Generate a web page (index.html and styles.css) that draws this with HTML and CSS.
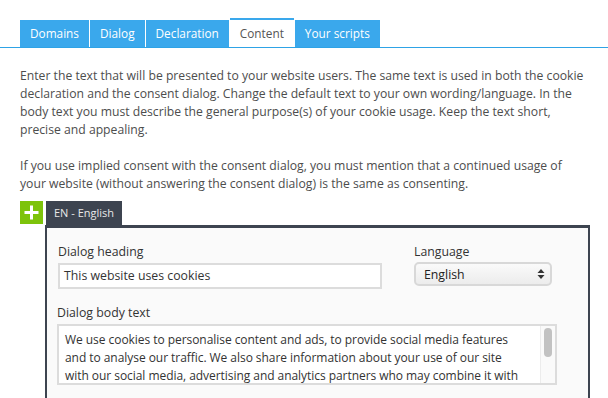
FILE: index.html
```html
<!DOCTYPE html>
<html>
<head>
<meta charset="utf-8">
<link rel="stylesheet" href="styles.css">
</head>
<body>
<nav class="tabs">
  <div class="tab">Domains</div>
  <div class="tab">Dialog</div>
  <div class="tab">Declaration</div>
  <div class="tab active">Content</div>
  <div class="tab">Your scripts</div>
</nav>
<main class="content">
  <p class="intro">Enter the text that will be presented to your website users. The same text is used in both the cookie<br>declaration and the consent dialog. Change the default text to your own wording/language. In the<br>body text you must describe the general purpose(s) of your cookie usage. Keep the text short,<br>precise and appealing.</p>
  <p class="intro">If you use implied consent with the consent dialog, you must mention that a continued usage of<br>your website (without answering the consent dialog) is the same as consenting.</p>
  <div class="langbar">
    <div class="addbtn"><svg width="23" height="23" viewBox="0 0 23 23"><rect x="10" y="4.5" width="3" height="14" fill="#fff"/><rect x="4.5" y="10" width="14" height="3" fill="#fff"/></svg></div>
    <div class="langtab">EN - English</div>
  </div>
  <section class="panel">
    <div class="row">
      <div class="field heading">
        <div class="label">Dialog heading</div>
        <div class="input">This website uses cookies</div>
      </div>
      <div class="field lang">
        <div class="label">Language</div>
        <div class="select"><span>English</span><svg width="8" height="12" viewBox="0 0 8 12"><path d="M4 1 L7.5 5 H0.5 Z M4 11 L7.5 7 H0.5 Z" fill="#333"/></svg></div>
      </div>
    </div>
    <div class="field body">
      <div class="label">Dialog body text</div>
      <div class="textarea">
        <div class="tatext">We use cookies to personalise content and ads, to provide social media features<br>and to analyse our traffic. We also share information about your use of our site<br>with our social media, advertising and analytics partners who may combine it with</div>
        <div class="scroll"><div class="thumb"></div></div>
      </div>
    </div>
  </section>
</main>
</body>
</html>
```
FILE: styles.css
```css
html, body {
  margin: 0;
  padding: 0;
  background: #fff;
  overflow: hidden;
}
body {
  font-family: "Open Sans", "Noto Sans", sans-serif;
  font-size: 12px;
  color: #4a4a4a;
  width: 608px;
  height: 398px;
}
.tabs {
  display: flex;
  align-items: flex-end;
  gap: 1px;
  padding: 18px 0 0 20px;
  border-bottom: 1px solid #2ea3e6;
  height: 29px;
  box-sizing: content-box;
}
.tab {
  height: 27px;
  line-height: 27px;
  padding: 0 10px;
  background: #3aa8ec;
  color: #fff;
  font-size: 11.8px;
}
.tab.active {
  height: 27px;
  line-height: 27px;
  background: #fff;
  color: #555;
  border-top: 2px solid #3aa8ec;
}
.content {
  padding: 0 0 0 20px;
}
.intro {
  margin: 19px 0 0 0;
  line-height: 18px;
  font-size: 12.2px;
  white-space: nowrap;
  color: #4d4d4d;
}
.intro + .intro {
  margin-top: 18px;
}
.langbar {
  display: flex;
  align-items: flex-start;
  margin-top: 8px;
  height: 24px;
}
.addbtn {
  width: 23px;
  height: 23px;
  background: #7dc30a;
  display: flex;
}
.langtab {
  margin-left: 3px;
  height: 24px;
  line-height: 24px;
  padding: 0 8px;
  white-space: nowrap;
  background: #3d4450;
  color: #e8e8e8;
  font-size: 11px;
}
.panel {
  margin-left: 25px;
  width: 530px;
  border: 2px solid #3d4450;
  border-top-width: 3px;
  border-bottom: none;
  background: #fafafa;
  padding: 15px 0 0 11px;
  height: 157px;
}
.row {
  display: flex;
  gap: 32px;
}
.label {
  line-height: 18px;
  font-size: 12.3px;
  color: #333;
  margin-bottom: 2px;
}
.input {
  width: 312px;
  height: 22px;
  line-height: 22px;
  border: 2px solid #dcdcdc;
  background: #fff;
  padding: 0 4px;
  font-size: 12.3px;
  color: #333;
}
.select {
  margin-top: -1px;
  width: 121px;
  height: 20px;
  border: 2px solid #d8d8d8;
  border-radius: 5px;
  background: linear-gradient(#fafafa, #ececec);
  display: flex;
  align-items: center;
  justify-content: space-between;
  padding: 0 5px 0 8px;
  font-size: 12.3px;
  color: #222;
}
.field.body {
  margin-top: 15px;
}
.field.body .label {
  margin-left: -1px;
}
.textarea {
  margin-left: -1px;
  width: 496px;
  height: 57px;
  border: 2px solid #dcdcdc;
  background: #fff;
  display: flex;
  overflow: hidden;
}
.tatext {
  flex: 1;
  padding: 5px 4px 0 6px;
  line-height: 18px;
  font-size: 12px;
  letter-spacing: -0.05px;
  white-space: nowrap;
  overflow: hidden;
  color: #333;
}
.scroll {
  width: 14px;
  border-left: 1px solid #ececec;
  background: #fafafa;
  display: flex;
  justify-content: center;
}
.thumb {
  margin-top: 2px;
  width: 8px;
  height: 29px;
  border-radius: 4px;
  background: #c2c2c2;
}
```
